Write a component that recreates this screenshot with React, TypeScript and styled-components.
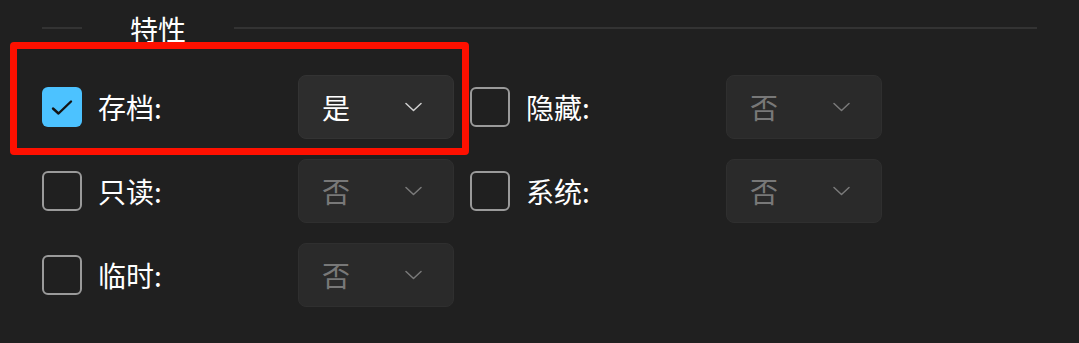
import React from 'react';
import styled, { createGlobalStyle } from 'styled-components';

const GlobalStyle = createGlobalStyle`
  html, body {
    margin: 0;
    padding: 0;
    background: #202020;
  }
  body {
    font-family: "Noto Sans CJK SC", "Noto Sans", sans-serif;
    color: #ffffff;
  }
`;

const Page = styled.div`
  position: relative;
  box-sizing: border-box;
  width: 1079px;
  height: 343px;
  padding: 8px 42px 0;
`;

const Header = styled.div`
  display: flex;
  align-items: center;
  height: 40px;
`;

const Rule = styled.div<{ $grow?: boolean }>`
  height: 2px;
  background: #333333;
  width: ${(p) => (p.$grow ? 'auto' : '40px')};
  flex: ${(p) => (p.$grow ? '1' : 'none')};
`;

const Title = styled.span`
  padding: 0 48px;
  font-size: 28px;
  line-height: 40px;
  position: relative;
  top: 1px;
`;

const Grid = styled.div`
  display: grid;
  grid-template-columns: repeat(2, 412px);
  column-gap: 16px;
  row-gap: 20px;
  margin-top: 27px;
`;

const Item = styled.div`
  display: grid;
  grid-template-columns: 40px 184px 156px;
  column-gap: 16px;
  align-items: center;
  height: 64px;
`;

const Box = styled.div<{ $checked: boolean }>`
  box-sizing: border-box;
  width: 40px;
  height: 40px;
  border-radius: 6px;
  background: ${(p) => (p.$checked ? '#4cc2ff' : 'transparent')};
  border: ${(p) => (p.$checked ? 'none' : '2px solid #9a9a9a')};
  display: flex;
  align-items: center;
  justify-content: center;
`;

const Label = styled.span`
  font-size: 28px;
  line-height: 40px;
`;

const Select = styled.div<{ $disabled: boolean }>`
  box-sizing: border-box;
  height: 64px;
  border-radius: 8px;
  background: ${(p) => (p.$disabled ? '#2a2a2a' : '#2d2d2d')};
  border: 1px solid ${(p) => (p.$disabled ? '#2f2f2f' : '#333333')};
  display: flex;
  align-items: center;
  justify-content: space-between;
  padding: 0 31px 0 23px;
  font-size: 28px;
  color: ${(p) => (p.$disabled ? '#787878' : '#ffffff')};
`;

const Chevron = styled.svg<{ $disabled: boolean }>`
  width: 17px;
  height: 10px;
  stroke: ${(p) => (p.$disabled ? '#7a7a7a' : '#d0d0d0')};
  fill: none;
`;

const Highlight = styled.div`
  position: absolute;
  left: 10px;
  top: 42px;
  width: 459px;
  height: 113px;
  box-sizing: border-box;
  border: 7px solid #fe1000;
  border-radius: 4px;
  pointer-events: none;
`;

type Attr = { label: string; checked: boolean };

const attrs: Attr[] = [
  { label: '存档:', checked: true },
  { label: '隐藏:', checked: false },
  { label: '只读:', checked: false },
  { label: '系统:', checked: false },
  { label: '临时:', checked: false },
];

function Check() {
  return (
    <svg width="40" height="40" viewBox="0 0 40 40">
      <path d="M11 21.5 L16.5 26.5 L29 14.5" stroke="#141414" strokeWidth="2.4" fill="none" strokeLinecap="round" strokeLinejoin="round" />
    </svg>
  );
}

function AttrRow({ label, checked }: Attr) {
  return (
    <Item>
      <Box $checked={checked}>{checked && <Check />}</Box>
      <Label>{label}</Label>
      <Select $disabled={!checked}>
        <span>{checked ? '是' : '否'}</span>
        <Chevron $disabled={!checked} viewBox="0 0 17 10">
          <path d="M1 1.5 L8.5 8.5 L16 1.5" strokeWidth="1.5" strokeLinecap="round" strokeLinejoin="round" />
        </Chevron>
      </Select>
    </Item>
  );
}

export default function App() {
  return (
    <>
      <GlobalStyle />
      <Page>
        <Header>
          <Rule />
          <Title>特性</Title>
          <Rule $grow />
        </Header>
        <Grid>
          {attrs.map((a) => (
            <AttrRow key={a.label} {...a} />
          ))}
        </Grid>
        <Highlight />
      </Page>
    </>
  );
}
